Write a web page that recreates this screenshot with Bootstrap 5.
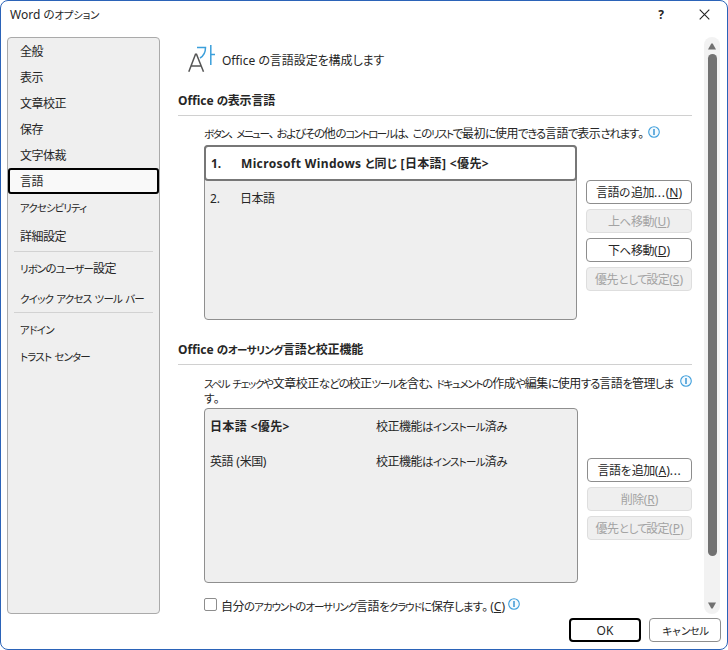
<!DOCTYPE html>
<html lang="ja">
<head>
    <meta charset="UTF-8">
    <meta name="viewport" content="width=device-width, initial-scale=1.0">
    <title>Word のオプション</title>
    <link href="https://cdn.jsdelivr.net/npm/bootstrap@5.3.3/dist/css/bootstrap.min.css" rel="stylesheet">
    <style>
        body { background: #fff; color: #262626; font-family: "Noto Sans", "Noto Sans CJK JP", sans-serif; font-size: 12px; line-height: 16px; font-feature-settings: "palt"; overflow: hidden; }
        .dialog { width: 728px; height: 650px; border: 1px solid #2b63b8; border-radius: 8px; background: #fff; white-space: nowrap; }
        .kata { letter-spacing: calc(-.9px + var(--fit, 0px)); font-size: 10.5px; line-height: 1; }
        .hira { letter-spacing: calc(-.7px + var(--fit, 0px)); font-size: 11.5px; line-height: 1; }
        .punct { letter-spacing: 2px; line-height: 1; }
        .kanji { letter-spacing: -.5px; line-height: 1; }

        .titlebar { height: 36px; padding: 6px 17px 0 9px; }
        .titlebar svg { margin-top: 2px; }
        .help { margin-right: 35px; }
        .main-area { height: 577px; }

        .side { width: 153px; margin-left: 6px; background: #efefef; border: 1px solid #aaa; border-radius: 4px; }
        .side .nav-link { height: 26px; padding: 6px 12px 0; color: #262626; line-height: 16px; }
        .side .nav-link.active { padding: 4px 10px 0; background: #f9f9f9; border: 2px solid #000; border-radius: 3px; }
        .side .tall { height: 30px; padding-top: 9px; }
        .side .taller { height: 31px; padding-top: 9px; }
        .side .sep { height: 1px; margin: 0 6px; background: #d2d2d2; }

        .content { width: 514px; margin-left: 18px; }
        .page-head { height: 44px; padding: 7px 0 0 10px; }
        .head-text { margin: 9px 0 0 5px; }
        .head-text .kanji { letter-spacing: 0; }
        .head-text .hira { font-size: 12px; }
        .section-title { height: 35px; padding-top: 12px; font-weight: 700; border-bottom: 1px solid #d0d0d0; }
        .section-title .kanji { letter-spacing: -.2px; }
        .title-two { height: 45px; padding-top: 22px; }
        .desc { padding-left: 26px; }
        .desc-one { height: 29px; padding-top: 10px; }
        .desc-one .info-icon { margin-left: 2px; }
        .desc-two { height: 43px; padding-top: 11px; line-height: 15px; }
        .desc-two .info-icon { margin: -1px 0 0 auto; }

        .lang-list { width: 373px; height: 175px; background: #efefef; border: 1px solid #8f8f8f; border-radius: 4px; }
        .lang-list.list-two { width: 374px; }
        .lang-row { height: 35px; padding: 10px 6px 0 5px; }
        .lang-row.current { margin: -1px -1px 0; height: 36px; padding: 9px 6px 0 5px; background: #fff; border: 2px solid #777; border-radius: 4px; }
        .num { width: 30px; }
        .lang-name { width: 166px; }
        .wide-bold, .wide-bold .kanji { letter-spacing: .36px; }

        .btn-dlg { --bs-btn-font-size: 12px; --bs-btn-line-height: 16px; --bs-btn-padding-x: 0; --bs-btn-border-radius: 4px; --bs-btn-color: #262626; --bs-btn-bg: #fff; --bs-btn-border-color: #8d8d8d; --bs-btn-disabled-color: #a3a3a3; --bs-btn-disabled-bg: #efefef; --bs-btn-disabled-border-color: #dedede; --bs-btn-disabled-opacity: 1; width: 106px; height: 24px; padding: 4px 0 2px; }
        .btn-stack { gap: 5px; }
        .stack-one { padding-top: 35px; }
        .stack-narrow { padding-top: 50px; }
        .stack-narrow .btn-dlg { width: 105px; }
        .btn-dlg.btn-foot { width: 72px; }
        .btn-dlg.btn-ok { border: 2px solid #000; padding: 3px 0 1px; }
        .dots { letter-spacing: .7px; }

        .cloud { padding-top: 15px; }
        .checkbox { width: 13px; height: 13px; border: 1px solid #8d8d8d; border-radius: 2px; }
        .cloud-text { margin: 1px 3px 0 4px; }

        .scroll { width: 16px; margin-left: 12px; padding: 5px 0 4px; background: #f2f2f2; border-radius: 8px; }
        .thumb { width: 9px; height: 502px; border-radius: 5px; background: #717171; }
        .foot { gap: 8px; padding: 4px 6px 0 0; }
    </style>
</head>
<body>

<svg class="d-none">
    <symbol id="info" viewBox="0 0 12 12">
        <circle cx="6" cy="6" r="5.3" fill="#f4fafe" stroke="#3f9fdc" stroke-width="1.1"/>
        <path d="M6 3v6" stroke="#2e8fd0" stroke-width="1.4"/>
    </symbol>
</svg>

<div class="dialog d-flex flex-column">
    <div class="titlebar d-flex">
        <div class="me-auto"><span data-width="89">Word のオプション</span></div>
        <div class="fw-bold help">?</div>
        <svg class="close-x" width="11" height="11" viewBox="0 0 11 11"><path d="M.7.7l9.6 9.6M10.3.7L.7 10.3" stroke="#222" stroke-width="1.1"/></svg>
    </div>

    <div class="main-area d-flex">
        <nav class="side nav flex-column flex-nowrap">
            <a class="nav-link" href="#">全般</a>
            <a class="nav-link" href="#">表示</a>
            <a class="nav-link" href="#">文章校正</a>
            <a class="nav-link" href="#">保存</a>
            <a class="nav-link" href="#">文字体裁</a>
            <a class="nav-link active" href="#">言語</a>
            <a class="nav-link" href="#"><span data-width="66">アクセシビリティ</span></a>
            <a class="nav-link taller" href="#">詳細設定</a>
            <div class="sep"></div>
            <a class="nav-link tall" href="#"><span data-width="96">リボンのユーザー設定</span></a>
            <a class="nav-link tall" href="#"><span data-width="124">クイック アクセス ツール バー</span></a>
            <div class="sep"></div>
            <a class="nav-link tall" href="#"><span data-width="34">アドイン</span></a>
            <a class="nav-link" href="#"><span data-width="70">トラスト センター</span></a>
        </nav>

        <div class="content">
            <div class="page-head d-flex">
                <svg width="29" height="30" viewBox="0 0 29 30" fill="none">
                    <path d="M.8 27.800L7.500 10.300h1L15.500 27.800M3.200 22H13" stroke="#555" stroke-width="1.5"/>
                    <path d="M9 3.500h8.500c0 5-2 8.500-5.500 10.500M22.800 1v20M22.800 10.500H27" stroke="#3b9fdb" stroke-width="1.5"/>
                </svg>
                <div class="head-text"><span data-width="162">Office の言語設定を構成します</span></div>
            </div>

            <div class="section-title"><span data-width="97">Office の表示言語</span></div>
            <div class="desc desc-one d-flex">
                <div><span data-width="442">ボタン、メニュー、およびその他のコントロールは、このリストで最初に使用できる言語で表示されます。</span></div>
                <svg class="info-icon" width="12" height="12"><use href="#info"/></svg>
            </div>
            <div class="desc d-flex justify-content-between">
                <div class="lang-list">
                    <div class="lang-row current d-flex fw-bold"><span class="num">1.</span><span class="wide-bold" data-width="248">Microsoft Windows と同じ [日本語] &lt;優先&gt;</span></div>
                    <div class="lang-row d-flex"><span class="num">2.</span><span>日本語</span></div>
                </div>
                <div class="btn-stack stack-one d-flex flex-column">
                    <button class="btn btn-dlg"><span data-width="86">言語の追加<span class="dots">...</span>(<u>N</u>)</span></button>
                    <button class="btn btn-dlg" disabled><span data-width="62">上へ移動(<u>U</u>)</span></button>
                    <button class="btn btn-dlg"><span data-width="62">下へ移動(<u>D</u>)</span></button>
                    <button class="btn btn-dlg" disabled><span data-width="88">優先として設定(<u>S</u>)</span></button>
                </div>
            </div>

            <div class="section-title title-two"><span data-width="185">Office のオーサリング言語と校正機能</span></div>
            <div class="desc desc-two d-flex">
                <div><span data-width="469">スペル チェックや文章校正などの校正ツールを含む、ドキュメントの作成や編集に使用する言語を管理しま</span><br>す。</div>
                <svg class="info-icon" width="12" height="12"><use href="#info"/></svg>
            </div>
            <div class="desc d-flex justify-content-between">
                <div class="lang-list list-two">
                    <div class="lang-row d-flex"><b class="lang-name wide-bold">日本語 &lt;優先&gt;</b><span data-width="131">校正機能はインストール済み</span></div>
                    <div class="lang-row d-flex"><span class="lang-name">英語 (米国)</span><span data-width="131">校正機能はインストール済み</span></div>
                </div>
                <div class="btn-stack stack-narrow d-flex flex-column">
                    <button class="btn btn-dlg"><span data-width="84">言語を追加(<u>A</u>)<span class="dots">...</span></span></button>
                    <button class="btn btn-dlg" disabled>削除(<u>R</u>)</button>
                    <button class="btn btn-dlg" disabled><span data-width="88">優先として設定(<u>P</u>)</span></button>
                </div>
            </div>
            <div class="desc cloud d-flex">
                <span class="checkbox"></span>
                <div class="cloud-text"><span data-width="284">自分のアカウントのオーサリング言語をクラウドに保存します。(<u>C</u>)</span></div>
                <svg class="info-icon" width="12" height="12"><use href="#info"/></svg>
            </div>
        </div>

        <div class="scroll d-flex flex-column align-items-center justify-content-between">
            <svg width="10" height="8"><path d="M1 7.500L4.300 1.500h1.400L9 7.500z" fill="#717171"/></svg>
            <div class="thumb mb-auto mt-1"></div>
            <svg width="10" height="8"><path d="M1 .5L4.300 6.500h1.400L9 .5z" fill="#717171"/></svg>
        </div>
    </div>

    <div class="foot d-flex justify-content-end">
        <button class="btn btn-dlg btn-foot btn-ok">OK</button>
        <button class="btn btn-dlg btn-foot"><span data-width="46">キャンセル</span></button>
    </div>
</div>

<script>
    // each script gets its own tracking: katakana tightest, kanji nearly full width
    const kinds = [
        [/^[\u30a0-\u30ff]/, 'kata'],
        [/^[\u3040-\u309f]/, 'hira'],
        [/^[\u3001\u3002]/, 'punct'],
        [/^[\u4e00-\u9fff]/, 'kanji']
    ];
    const walker = document.createTreeWalker(document.querySelector('.dialog'), NodeFilter.SHOW_TEXT);
    const nodes = [];
    while (walker.nextNode()) nodes.push(walker.currentNode);
    nodes.forEach(node => {
        const parts = node.data.split(/([\u30a0-\u30ff]+|[\u3040-\u309f]+|[\u3001\u3002]+|[\u4e00-\u9fff]+)/);
        if (parts.length < 2) return;
        const holder = document.createDocumentFragment();
        parts.filter(text => text).forEach(text => {
            const kind = kinds.find(k => k[0].test(text));
            if (!kind) {
                holder.appendChild(document.createTextNode(text));
                return;
            }
            const span = document.createElement('span');
            span.className = kind[1];
            span.textContent = text;
            holder.appendChild(span);
        });
        node.replaceWith(holder);
    });

    // spread what is left of a label's width over its kana
    document.querySelectorAll('[data-width]').forEach(label => {
        const kana = label.textContent.match(/[\u3040-\u30ff]/g) || [];
        if (!kana.length) return;
        const rest = Number(label.dataset.width) - label.getBoundingClientRect().width;
        label.style.setProperty('--fit', rest / kana.length + 'px');
    });
</script>
<script src="https://cdn.jsdelivr.net/npm/bootstrap@5.3.3/dist/js/bootstrap.bundle.min.js"></script>
</body>
</html>
